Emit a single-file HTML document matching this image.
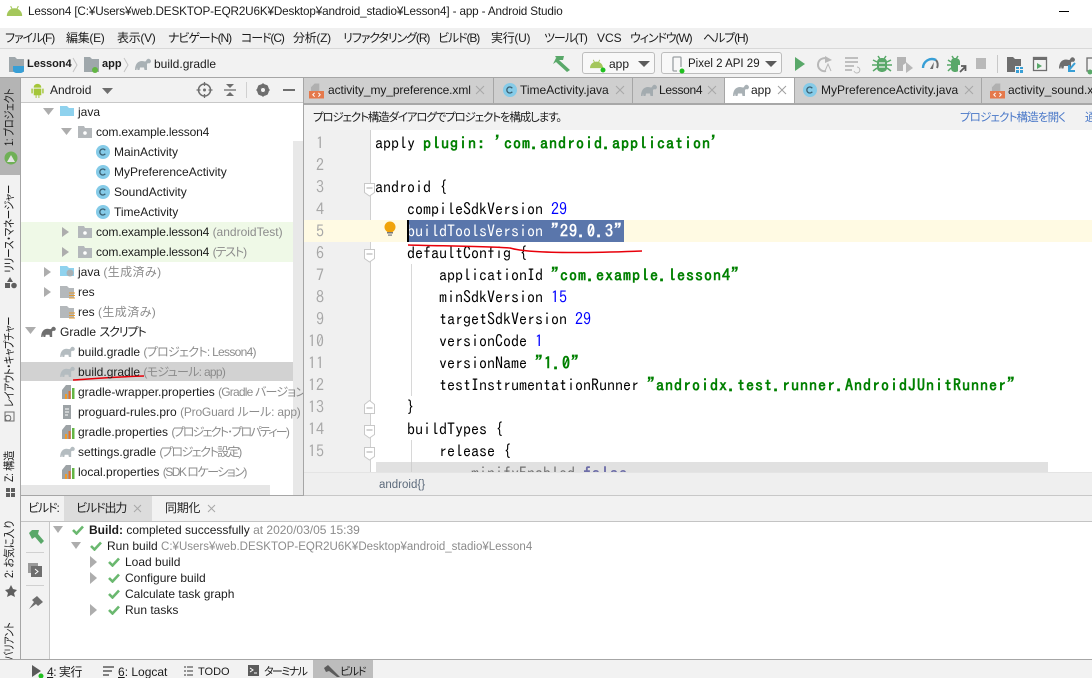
<!DOCTYPE html>
<html><head><meta charset="utf-8"><style>
*{box-sizing:border-box}
html,body{margin:0;padding:0;width:1092px;height:678px;overflow:hidden;background:#fff}
body{position:relative;font-family:"Liberation Sans","Noto Sans CJK JP",sans-serif;font-size:12px;color:#1c1c1c;font-feature-settings:"palt"}
.b{position:absolute}
.t{position:absolute;white-space:nowrap;line-height:18px;height:18px;font-size:12px}
.j{letter-spacing:-1.1px}
.g{color:#8c8c8c}
.m{position:absolute;white-space:pre;font-family:"IPAGothic","Liberation Mono",monospace;font-size:16px;line-height:22px;height:22px;color:#000;left:375px;font-feature-settings:normal}
.n{position:absolute;font-family:"IPAGothic","Liberation Mono",monospace;font-size:16px;line-height:22px;color:#a8a8a8;width:30px;text-align:right;left:294px;font-feature-settings:normal}
.s{color:#008000;font-weight:bold;letter-spacing:1px}.u{color:#0000ff}
.v{position:absolute;writing-mode:vertical-rl;text-orientation:sideways;transform-origin:10px 0;white-space:nowrap;font-size:11.5px;line-height:20px;width:20px;left:0;letter-spacing:-.3px}
svg{position:absolute;left:0;top:0}
</style></head><body>
<!-- backgrounds -->
<div class="b" style="left:0;top:28px;width:1092px;height:20px;background:#f0f0f0"></div>
<div class="b" style="left:0;top:48px;width:1092px;height:1px;background:#d8d8d8"></div>
<div class="b" style="left:0;top:49px;width:1092px;height:28px;background:#f2f2f2"></div>
<div class="b" style="left:0;top:77px;width:1092px;height:1px;background:#a6a6a6"></div>
<div class="b" style="left:0;top:78px;width:20px;height:582px;background:#f2f2f2"></div>
<div class="b" style="left:0;top:78px;width:20px;height:97px;background:#b4b4b4"></div>
<div class="b" style="left:20px;top:78px;width:1px;height:582px;background:#a6a6a6"></div>
<div class="b" style="left:21px;top:78px;width:283px;height:24px;background:#f2f2f2"></div>
<div class="b" style="left:21px;top:102px;width:283px;height:1px;background:#c8c8c8"></div>
<div class="b" style="left:21px;top:222px;width:272px;height:40px;background:#eff9e7"></div>
<div class="b" style="left:21px;top:362px;width:272px;height:19px;background:#d2d2d2"></div>
<div class="b" style="left:293px;top:141px;width:10px;height:354px;background:#e8e8e8"></div>
<div class="b" style="left:21px;top:485px;width:249px;height:10px;background:#e6e6e6"></div>
<div class="b" style="left:303px;top:78px;width:1px;height:417px;background:#a6a6a6"></div>
<!-- editor tabs -->
<div class="b" style="left:304px;top:78px;width:788px;height:25px;background:#cfcfcf"></div>
<div class="b" style="left:724px;top:78px;width:70px;height:25px;background:#fff"></div>
<div class="b" style="left:304px;top:103px;width:788px;height:2px;background:#a8a8a8"></div>
<div class="b" style="left:493px;top:78px;width:1px;height:25px;background:#a6a6a6"></div>
<div class="b" style="left:632px;top:78px;width:1px;height:25px;background:#a6a6a6"></div>
<div class="b" style="left:724px;top:78px;width:1px;height:25px;background:#a6a6a6"></div>
<div class="b" style="left:794px;top:78px;width:1px;height:25px;background:#a6a6a6"></div>
<div class="b" style="left:981px;top:78px;width:1px;height:25px;background:#a6a6a6"></div>
<div class="b" style="left:304px;top:105px;width:788px;height:25px;background:#f2f2f2"></div>
<!-- gutter -->
<div class="b" style="left:304px;top:130px;width:66px;height:342px;background:#f0f0f0"></div>
<div class="b" style="left:370px;top:130px;width:1px;height:342px;background:#d0d0d0"></div>
<div class="b" style="left:304px;top:220px;width:788px;height:22px;background:#fffae3"></div>
<div class="b" style="left:407px;top:220px;width:217px;height:22px;background:#5a76ab"></div>
<div class="b" style="left:411px;top:264px;width:1px;height:132px;background:#d8d8d8"></div>
<div class="b" style="left:411px;top:440px;width:1px;height:32px;background:#d8d8d8"></div>
<!-- code -->
<div class="n" style="top:132px">1</div><div class="n" style="top:154px">2</div><div class="n" style="top:176px">3</div><div class="n" style="top:198px">4</div><div class="n" style="top:220px">5</div><div class="n" style="top:242px">6</div><div class="n" style="top:264px">7</div><div class="n" style="top:286px">8</div><div class="n" style="top:308px">9</div><div class="n" style="top:330px">10</div><div class="n" style="top:352px">11</div><div class="n" style="top:374px">12</div><div class="n" style="top:396px">13</div><div class="n" style="top:418px">14</div><div class="n" style="top:440px">15</div>
<div class="m" style="top:132px">apply <span class="s">plugin: 'com.android.application'</span></div>
<div class="m" style="top:176px">android {</div>
<div class="m" style="top:198px">    compileSdkVersion <span class="u">29</span></div>
<div class="m" style="top:220px;color:#fff">    buildToolsVersion <span class="s" style="color:#fff">"29.0.3"</span></div>
<div class="b" style="left:407px;top:220px;width:2px;height:22px;background:#000"></div>
<div class="m" style="top:242px">    defaultConfig {</div>
<div class="m" style="top:264px">        applicationId <span class="s">"com.example.lesson4"</span></div>
<div class="m" style="top:286px">        minSdkVersion <span class="u">15</span></div>
<div class="m" style="top:308px">        targetSdkVersion <span class="u">29</span></div>
<div class="m" style="top:330px">        versionCode <span class="u">1</span></div>
<div class="m" style="top:352px">        versionName <span class="s">"1.0"</span></div>
<div class="m" style="top:374px">        testInstrumentationRunner <span class="s">"androidx.test.runner.AndroidJUnitRunner"</span></div>
<div class="m" style="top:396px">    }</div>
<div class="m" style="top:418px">    buildTypes {</div>
<div class="m" style="top:440px">        release {</div>
<div class="m" style="top:462px;height:10px;overflow:hidden">            minifyEnabled <span style="color:#000080;font-weight:bold;letter-spacing:1px">false</span></div>
<div class="b" style="left:376px;top:462px;width:672px;height:10px;background:rgba(200,200,200,.55)"></div>
<div class="b" style="left:304px;top:472px;width:788px;height:23px;background:#efefef;border-top:1px solid #e4e4e4"></div>
<div class="b" style="left:304px;top:495px;width:788px;height:1px;background:#c8c8c8"></div>
<div class="t" style="left:379px;top:476px;font-size:11.5px;color:#5d6b7c">android{}</div>
<!-- bottom -->
<div class="b" style="left:21px;top:495px;width:283px;height:1px;background:#a6a6a6"></div>
<div class="b" style="left:21px;top:496px;width:1071px;height:25px;background:#f2f2f2"></div>
<div class="b" style="left:64px;top:496px;width:88px;height:25px;background:#dcdcdc"></div>
<div class="b" style="left:21px;top:521px;width:1071px;height:1px;background:#c4c4c4"></div>
<div class="b" style="left:21px;top:522px;width:28px;height:137px;background:#f2f2f2"></div>
<div class="b" style="left:49px;top:522px;width:1px;height:137px;background:#c8c8c8"></div>
<div class="b" style="left:0;top:660px;width:1092px;height:18px;background:#f2f2f2"></div>
<div class="b" style="left:313px;top:660px;width:60px;height:18px;background:#bdbdbd"></div>
<div class="b" style="left:26px;top:552px;width:18px;height:1px;background:#d0d0d0"></div>
<div class="b" style="left:26px;top:585px;width:18px;height:1px;background:#d0d0d0"></div>
<!-- dropdown boxes -->
<div class="b" style="left:582px;top:52px;width:73px;height:22px;background:#f8f8f8;border:1px solid #bdbdbd;border-radius:3px"></div>
<div class="b" style="left:661px;top:52px;width:121px;height:22px;background:#f8f8f8;border:1px solid #bdbdbd;border-radius:3px"></div>
<div class="b" style="left:997px;top:55px;width:1px;height:18px;background:#c8c8c8"></div>
<div class="b" style="left:246px;top:82px;width:1px;height:16px;background:#d0d0d0"></div>

<!-- icons -->
<svg width="1092" height="678" viewBox="0 0 1092 678">
<defs>
<symbol id="ele" viewBox="0 0 16 12"><path d="M0 12C0 6 3 3 7 3C9 3 10 4 11 3C12 0 15 0 16 3C16 5 14 6 13 5L12 6V12H9.500L9 9.500H5L4.500 12H2.500L2 9.500L1.500 12Z"/></symbol>
<symbol id="cl" viewBox="0 0 14 14"><circle cx="7" cy="7" r="7" fill="#85cbe8"/><path d="M9.300 5.300A3 3 0 1 0 9.300 8.700" fill="none" stroke="#3b5f70" stroke-width="1.300"/></symbol>
<symbol id="pk" viewBox="0 0 14 12"><path d="M0 0H6L7 2H14V12H0Z" fill="#b4b8bb"/><circle cx="7" cy="7" r="1.800" fill="#fff"/></symbol>
<symbol id="pr" viewBox="0 0 14 14"><path d="M0 5L4 0H9V14H0Z" fill="#9da3a6"/><rect x="3" y="9" width="2" height="5" fill="#f09a28"/><rect x="6.500" y="6" width="2" height="8" fill="#e2702a"/><rect x="10" y="3" width="2.500" height="11" fill="#62b543"/></symbol>
<symbol id="ck" viewBox="0 0 12 10"><path d="M1 5L4.500 8.500L11 1.500" fill="none" stroke="#6ab86f" stroke-width="2.600"/></symbol>
<symbol id="an" viewBox="0 0 14 10"><path d="M0 10C0 6 3 3 7 3C11 3 14 6 14 10Z"/><path d="M3.500 1L5 4M10.500 1L9 4" stroke-width="1" stroke="currentColor"/></symbol>
<symbol id="fx" viewBox="0 0 14 18"><path d="M3 7H11V14H9V17H8V14H6V17H5V14H3ZM3 6C3 3 5 2 7 2C9 2 11 3 11 6ZM0.500 7H2V12H0.500ZM12 7H13.500V12H12Z" fill="#a4c639"/></symbol>
<symbol id="xml" viewBox="0 0 16 16"><path d="M2 0H11V8H2Z" fill="#b0b0b0"/><path d="M2 4L6 0H2Z" fill="#cfcfcf"/><rect y="8" width="16" height="8" fill="#e5794b"/><path d="M6 10L4 12L6 14M10 10L12 12L10 14" fill="none" stroke="#fff" stroke-width="1"/></symbol>
</defs>
<!-- title bar android -->
<g color="#a4c75b" fill="#a4c75b"><use href="#an" x="6" y="5" width="17" height="11"/></g>
<!-- nav -->
<path d="M9 57H15L17 59H24V72H9Z" fill="#9fa7ab"/><path d="M13 66H24V70C24 72 22 73 20 73H17C15 73 13 72 13 70Z" fill="#389fd6"/>
<path d="M73 58L77 65L73 72" fill="none" stroke="#c4c4c4"/>
<path d="M84 57H90L92 59H99V72H84Z" fill="#9fa7ab"/><circle cx="95" cy="70" r="3" fill="#62b543"/>
<path d="M124 58L128 65L124 72" fill="none" stroke="#c4c4c4"/>
<use href="#ele" x="135" y="58" width="16" height="12" fill="#a9b1b5"/>
<!-- toolbar -->
<path d="M555 57L559 60L570 70L567 72L556 62L553 64L556 58Z M555 56H564L563 60H558Z" fill="#59a869"/>
<g color="#a4c75b" fill="#a4c75b"><use href="#an" x="590" y="58" width="13" height="11"/></g><circle cx="603" cy="70" r="2.500" fill="#1fbf1f"/>
<path d="M638 61H650L644 67Z" fill="#5b5b5b"/>
<rect x="673" y="57" width="8" height="14" rx="1" fill="none" stroke="#9aa0a3" stroke-width="1.300"/><rect x="677" y="67" width="5" height="5" fill="#f8f8f8"/><circle cx="682" cy="71" r="2.500" fill="#1fbf1f"/>
<path d="M765 61H777L771 67Z" fill="#5b5b5b"/>
<path d="M795 57L805 64L795 71Z" fill="#59a869"/>
<path d="M829 60A6.500 6.500 0 1 0 826 71" fill="none" stroke="#b8b8b8" stroke-width="2"/><path d="M825 56L832 60L825 63Z" fill="#b8b8b8"/><path d="M825 71L828 64L831 71" fill="none" stroke="#b8b8b8"/>
<path d="M845 58H858M845 62H858M845 66H854M845 70H852" stroke="#b8b8b8" stroke-width="1.700"/><path d="M857 67A3 3 0 1 1 854 71" fill="none" stroke="#b8b8b8"/>
<path d="M877 62C877 59 880 58 882 58C884 58 887 59 887 62V68C887 71 884 72 882 72C880 72 877 71 877 68Z" fill="#59a869"/><path d="M873 60L877 62M891 60L887 62M872 65H877M892 65H887M873 71L877 68M891 71L887 68M878 56L880 59M886 56L884 59" stroke="#59a869" stroke-width="1.500"/><path d="M879 63H885M879 67H885" stroke="#f2f2f2" stroke-width="1.300"/>
<path d="M897 57H906V63L903 65V71H897Z" fill="#b4b4b4"/><path d="M906 62L913 68L906 73Z" fill="#b8b8b8"/>
<path d="M923 68A9 9 0 0 1 936 60" fill="none" stroke="#389fd6" stroke-width="2.400"/><path d="M936 60A8 8 0 0 1 937 68" fill="none" stroke="#6e6e6e" stroke-width="2"/><path d="M930 69L934 62L933 69Z" fill="#6e6e6e"/>
<path d="M951 62C951 59 953 58 955 58C957 58 960 59 960 62V68C960 71 957 72 955 72C953 72 951 71 951 68Z" fill="#59a869"/><path d="M948 60L951 62M947 65H951M948 71L951 68M952 56L954 59M958 56L956 59" stroke="#59a869" stroke-width="1.500"/><path d="M958 65H966V73H958Z" fill="#f2f2f2"/><path d="M960 72L965 67M961 66H965.500V71" fill="none" stroke="#5b5b5b" stroke-width="1.800"/>
<rect x="976" y="58" width="10" height="11" fill="#b9b9b9"/>
<path d="M1007 57H1013L1015 59H1021V66H1015V72H1007Z" fill="#6e6e6e"/><rect x="1015" y="66" width="9" height="7" fill="#f2f2f2"/><path d="M1016 67H1019V69H1016ZM1020 67H1023V69H1020ZM1016 70H1019V73H1016ZM1020 70H1023V73H1020Z" fill="#389fd6"/>
<rect x="1033.500" y="57.500" width="13" height="13" fill="none" stroke="#6e6e6e" stroke-width="1.300"/><rect x="1033" y="57" width="14" height="3" fill="#6e6e6e"/><path d="M1037 63L1042 66L1037 69Z" fill="#59a869"/>
<use href="#ele" x="1059" y="56" width="16" height="13" fill="#6e6e6e"/><path d="M1075 63L1069 70M1069 65V71H1075" fill="none" stroke="#389fd6" stroke-width="2"/>
<rect x="1087" y="58" width="8" height="13" fill="none" stroke="#6e6e6e" stroke-width="1.300"/><circle cx="1090" cy="72" r="2.500" fill="#59a869"/>
<!-- left stripe icons -->
<circle cx="11" cy="158" r="6.500" fill="#6fb056"/><path d="M7 162L11 155L15 162Z" fill="#e4e4e4"/>
<path d="M10 277L13 282H7Z M5 283H10V288H5Z" fill="#5f5f5f"/><circle cx="14" cy="285.500" r="2.800" fill="#5f5f5f"/>
<rect x="5" y="412" width="9" height="9" fill="none" stroke="#6e6e6e"/><circle cx="8" cy="418" r="2.800" fill="#f2f2f2" stroke="#6e6e6e"/>
<path d="M6 488H10V492H6ZM11 488H15V492H11ZM11 493H15V497H11ZM6 493H10V497H6Z" fill="#5f5f5f"/>
<path d="M11 585L13 589L17 590L14 593L15 597L11 595L7 597L8 593L5 590L9 589Z" fill="#5f5f5f"/>
<!-- project head -->
<use href="#fx" x="30" y="82" width="15" height="17"/>
<path d="M102 88H113L107.500 94Z" fill="#6e6e6e"/>
<circle cx="204.500" cy="90" r="6" fill="none" stroke="#6e6e6e" stroke-width="1.500"/><circle cx="204.500" cy="90" r="1.500" fill="#6e6e6e"/><path d="M204.500 82V86M204.500 94V98M196.500 90H200.500M208.500 90H212.500" stroke="#6e6e6e" stroke-width="1.300"/>
<path d="M224 90H236" stroke="#6e6e6e" stroke-width="1.300"/><path d="M226 84H234L230 88ZM226 96H234L230 92Z" fill="#6e6e6e"/>
<circle cx="263" cy="90" r="4.500" fill="none" stroke="#6e6e6e" stroke-width="3"/><path d="M263 83.500V96.500M256.500 90H269.500M258.500 85.500L267.500 94.500M267.500 85.500L258.500 94.500" stroke="#6e6e6e" stroke-width="2"/><circle cx="263" cy="90" r="2" fill="#f2f2f2"/>
<rect x="283" y="89" width="12" height="2" fill="#6e6e6e"/>
<!-- tabs -->
<use href="#xml" x="309" y="83" width="15" height="16"/>
<path d="M476 86L484 94M484 86L476 94" stroke="#a8a8a8"/>
<use href="#cl" x="503" y="83" width="14" height="14"/>
<path d="M616 86L624 94M624 86L616 94" stroke="#a8a8a8"/>
<use href="#ele" x="641" y="84" width="16" height="12" fill="#a3abaf"/>
<path d="M708 86L716 94M716 86L708 94" stroke="#a8a8a8"/>
<use href="#ele" x="733" y="84" width="16" height="12" fill="#a9b1b5"/>
<path d="M778 86L786 94M786 86L778 94" stroke="#a0a0a0"/>
<use href="#cl" x="803" y="83" width="14" height="14"/>
<path d="M965 86L973 94M973 86L965 94" stroke="#a8a8a8"/>
<use href="#xml" x="990" y="83" width="15" height="16"/>
<!-- tree -->
<g fill="#adadad">
<path d="M43 108H54L48.500 115Z"/><path d="M61 128H72L66.500 135Z"/>
<path d="M62 227L69 232L62 237Z"/><path d="M62 247L69 252L62 257Z"/>
<path d="M44 267L51 272L44 277Z"/><path d="M44 287L51 292L44 297Z"/>
<path d="M25 327H36L30.500 334Z"/></g>
<path d="M60 106H67L69 108H74V116H60Z" fill="#8fd2ee"/>
<use href="#pk" x="78" y="126" width="14" height="12"/>
<use href="#cl" x="96" y="145" width="14" height="14"/><use href="#cl" x="96" y="165" width="14" height="14"/><use href="#cl" x="96" y="185" width="14" height="14"/><use href="#cl" x="96" y="205" width="14" height="14"/>
<use href="#pk" x="78" y="226" width="14" height="12"/><use href="#pk" x="78" y="246" width="14" height="12"/>
<path d="M60 266H67L69 268H74V276H60Z" fill="#8fd2ee"/><circle cx="70" cy="273" r="3.500" fill="#a9b1b5"/>
<path d="M60 286H67L69 288H74V298H60Z" fill="#b4b8bb"/><path d="M69 293H75M69 295.500H75M69 298H75" stroke="#e69a2e"/>
<path d="M60 306H67L69 308H74V318H60Z" fill="#b4b8bb"/><path d="M69 313H75M69 315.500H75M69 318H75" stroke="#e69a2e"/>
<use href="#ele" x="41" y="326" width="15" height="11" fill="#6e6e6e"/>
<use href="#ele" x="60" y="346" width="15" height="11" fill="#b4bcc0"/>
<use href="#ele" x="60" y="366" width="15" height="11" fill="#b4bcc0"/>
<use href="#pr" x="62" y="385" width="14" height="14"/>
<path d="M63 405H71V419H63Z" fill="#9da3a6"/><path d="M65 409H69M65 412H69M65 415H68" stroke="#fff"/>
<use href="#pr" x="62" y="425" width="14" height="14"/>
<use href="#ele" x="60" y="446" width="15" height="11" fill="#b4bcc0"/>
<use href="#pr" x="62" y="465" width="14" height="14"/>
<!-- red strokes -->
<path d="M73 380C90 379 110 377 144 376" fill="none" stroke="#e8000a" stroke-width="1.500"/>
<path d="M408 245C440 246 480 246 510 248C530 254 590 253 642 251" fill="none" stroke="#e8000a" stroke-width="1.500"/>
<!-- bulb -->
<circle cx="390" cy="227" r="5.500" fill="#f0a30a"/><rect x="387" y="232" width="6" height="1.500" fill="#777"/><rect x="388" y="234.500" width="4" height="1.200" fill="#777"/>
<!-- folds -->
<g fill="#fff" stroke="#c8c8c8">
<path d="M364.500 183.500H374.500V192.500L369.500 196L364.500 192.500Z"/><path d="M364.500 249.500H374.500V258.500L369.500 262L364.500 258.500Z"/>
<path d="M364.500 413.500H374.500V404.500L369.500 400.500L364.500 404.500Z"/>
<path d="M364.500 425.500H374.500V434.500L369.500 438L364.500 434.500Z"/><path d="M364.500 447.500H374.500V456.500L369.500 460L364.500 456.500Z"/></g>
<path d="M366.500 188H372.500M366.500 254H372.500M366.500 408H372.500M366.500 430H372.500M366.500 452H372.500" stroke="#a8a8a8"/>
<!-- bottom tabs x -->
<path d="M134 505L141 512M141 505L134 512M208 505L215 512M215 505L208 512" stroke="#a8a8a8"/>
<!-- bottom left tools -->
<path d="M29 533L32 530H39L38 534L44 541L41 544L35 537L32 539Z" fill="#59a869"/>
<rect x="28" y="563" width="10" height="10" fill="#9a9a9a"/><rect x="31" y="566" width="11" height="11" fill="#6e6e6e"/><path d="M35 569L38 571.500L35 574" fill="none" stroke="#fff"/>
<path d="M29 609L34 602L32 600L37 596L43 602L38 606L36 604Z" fill="#6e6e6e"/>
<!-- build tree -->
<g fill="#adadad"><path d="M53 526H63L58 533Z"/><path d="M71 542H81L76 549Z"/><path d="M90 556L97 562L90 568Z"/><path d="M90 572L97 578L90 584Z"/><path d="M90 604L97 610L90 616Z"/></g>
<use href="#ck" x="72" y="525" width="12" height="10"/><use href="#ck" x="90" y="541" width="12" height="10"/><use href="#ck" x="108" y="557" width="12" height="10"/><use href="#ck" x="108" y="573" width="12" height="10"/><use href="#ck" x="108" y="589" width="12" height="10"/><use href="#ck" x="108" y="605" width="12" height="10"/>
<!-- status -->
<path d="M32 665L41 671L32 677Z" fill="#5b5b5b"/><circle cx="41" cy="676" r="2.500" fill="#1fbf1f"/>
<path d="M103 667H114M103 671H112M103 675H109" stroke="#5b5b5b" stroke-width="1.500"/>
<path d="M184 667H186M187 667H193M184 671H186M187 671H193M184 675H186M187 675H193" stroke="#5b5b5b" stroke-width="1.300"/>
<rect x="248" y="665" width="11" height="11" fill="#5b5b5b"/><path d="M250 668L253 670L250 672M254 673H257" fill="none" stroke="#fff"/>
<path d="M324 668L328 665L340 677H337L329 671L326 672Z" fill="#5b5b5b"/>
</svg>

<!-- title -->
<div class="t" style="left:28px;top:3px;font-size:11.7px;letter-spacing:-.14px">Lesson4 [C:¥Users¥web.DESKTOP-EQR2U6K¥Desktop¥android_stadio¥Lesson4] - app - Android Studio</div>
<div class="b" style="left:1059px;top:11px;width:10px;height:1px;background:#000"></div>
<!-- menu -->
<div class="t j" style="left:5px;top:29px">ファイル(F)</div>
<div class="t" style="left:66px;top:29px;letter-spacing:-.3px">編集(E)</div>
<div class="t" style="left:117px;top:29px;letter-spacing:-.3px">表示(V)</div>
<div class="t j" style="left:168px;top:29px">ナビゲート(N)</div>
<div class="t j" style="left:241px;top:29px">コード(C)</div>
<div class="t" style="left:293px;top:29px;letter-spacing:-.3px">分析(Z)</div>
<div class="t j" style="left:343px;top:29px">リファクタリング(R)</div>
<div class="t j" style="left:438px;top:29px">ビルド(B)</div>
<div class="t" style="left:491px;top:29px;letter-spacing:-.3px">実行(U)</div>
<div class="t j" style="left:544px;top:29px">ツール(T)</div>
<div class="t" style="left:597px;top:29px">VCS</div>
<div class="t j" style="left:630px;top:29px">ウィンドウ(W)</div>
<div class="t j" style="left:703px;top:29px">ヘルプ(H)</div>
<!-- nav text -->
<div class="t" style="left:27px;top:55px;font-weight:bold;font-size:11px">Lesson4</div>
<div class="t" style="left:102px;top:55px;font-weight:bold;font-size:11px">app</div>
<div class="t" style="left:154px;top:55px">build.gradle</div>
<div class="t" style="left:609px;top:55px">app</div>
<div class="t" style="left:688px;top:55px;font-size:11.5px">Pixel 2 API 29</div>
<!-- panel head -->
<div class="t" style="left:50px;top:81px">Android</div>
<!-- tabs text -->
<div class="t" style="left:328px;top:81px;letter-spacing:-.1px">activity_my_preference.xml</div>
<div class="t" style="left:520px;top:81px">TimeActivity.java</div>
<div class="t" style="left:659px;top:81px;letter-spacing:-.3px">Lesson4</div>
<div class="t" style="left:751px;top:81px">app</div>
<div class="t" style="left:821px;top:81px">MyPreferenceActivity.java</div>
<div class="t" style="left:1008px;top:81px">activity_sound.xml</div>
<!-- banner -->
<div class="t" style="left:313px;top:109px;font-size:11.5px;letter-spacing:-1.15px">プロジェクト構造ダイアログでプロジェクトを構成します。</div>
<div class="t" style="left:960px;top:109px;font-size:11.5px;letter-spacing:-.85px;color:#4a78c8">プロジェクト構造を開く</div>
<div class="t" style="left:1085px;top:109px;font-size:11.5px;color:#4a78c8">通</div>
<!-- tree text -->
<div class="t" style="left:78px;top:103px">java</div>
<div class="t" style="left:96px;top:123px;letter-spacing:-.15px">com.example.lesson4</div>
<div class="t" style="left:114px;top:143px">MainActivity</div>
<div class="t" style="left:114px;top:163px">MyPreferenceActivity</div>
<div class="t" style="left:114px;top:183px">SoundActivity</div>
<div class="t" style="left:114px;top:203px">TimeActivity</div>
<div class="t" style="left:96px;top:223px"><span style="letter-spacing:-.15px">com.example.lesson4</span> <span class="g">(androidTest)</span></div>
<div class="t" style="left:96px;top:243px"><span style="letter-spacing:-.15px">com.example.lesson4</span> <span class="g j">(テスト)</span></div>
<div class="t" style="left:78px;top:263px">java <span class="g" style="letter-spacing:.4px">(生成済み)</span></div>
<div class="t" style="left:78px;top:283px">res</div>
<div class="t" style="left:78px;top:303px">res <span class="g" style="letter-spacing:.4px">(生成済み)</span></div>
<div class="t" style="left:60px;top:323px">Gradle <span class="j">スクリプト</span></div>
<div class="t" style="left:78px;top:343px">build.gradle <span class="g" style="letter-spacing:-.7px">(プロジェクト: Lesson4)</span></div>
<div class="t" style="left:78px;top:363px">build.gradle <span class="g" style="letter-spacing:-.7px">(モジュール: app)</span></div>
<div class="t" style="left:78px;top:383px;width:225px;overflow:hidden">gradle-wrapper.properties <span class="g" style="letter-spacing:-.8px">(Gradle バージョン</span></div>
<div class="t" style="left:78px;top:403px">proguard-rules.pro <span class="g" style="letter-spacing:-.2px">(ProGuard ルール: app)</span></div>
<div class="t" style="left:78px;top:423px">gradle.properties <span class="g" style="letter-spacing:-1.8px">(プロジェクト･プロパティー)</span></div>
<div class="t" style="left:78px;top:443px">settings.gradle <span class="g" style="letter-spacing:-1.5px">(プロジェクト設定)</span></div>
<div class="t" style="left:78px;top:463px">local.properties <span class="g" style="letter-spacing:-1.5px">(SDK ロケーション)</span></div>
<!-- bottom text -->
<div class="t j" style="left:28px;top:499px">ビルド:</div>
<div class="t j" style="left:76px;top:499px">ビルド出力</div>
<div class="t" style="left:165px;top:499px;letter-spacing:-.3px">同期化</div>
<div class="t" style="left:89px;top:521px"><b>Build:</b> completed successfully <span class="g">at 2020/03/05 15:39</span></div>
<div class="t" style="left:107px;top:537px">Run build <span class="g" style="font-size:11.5px">C:¥Users¥web.DESKTOP-EQR2U6K¥Desktop¥android_stadio¥Lesson4</span></div>
<div class="t" style="left:125px;top:553px">Load build</div>
<div class="t" style="left:125px;top:569px">Configure build</div>
<div class="t" style="left:125px;top:585px">Calculate task graph</div>
<div class="t" style="left:125px;top:601px">Run tasks</div>
<!-- status text -->
<div class="t" style="left:47px;top:663px;letter-spacing:-.5px"><u>4</u>: 実行</div>
<div class="t" style="left:118px;top:663px"><u>6</u>: Logcat</div>
<div class="t" style="left:198px;top:663px;font-size:11px">TODO</div>
<div class="t" style="left:264px;top:663px;font-size:11px;letter-spacing:-1.6px">ターミナル</div>
<div class="t" style="left:340px;top:663px;font-size:11px;letter-spacing:-1.3px">ビルド</div>
<!-- vertical -->
<div class="v" style="top:146px;transform:rotate(180deg) scaleY(.8)">1: プロジェクト</div>
<div class="v" style="top:273px;transform:rotate(180deg) scaleY(.83)">リリース・マネージャー</div>
<div class="v" style="top:407px;transform:rotate(180deg) scaleY(.79)">レイアウト・キャプチャー</div>
<div class="v" style="top:482px;transform:rotate(180deg) scaleY(.89)">Z: 構造</div>
<div class="v" style="top:578px;transform:rotate(180deg) scaleY(.88)">2: お気に入り</div>
<div class="v" style="top:660px;transform:rotate(180deg) scaleY(.78)">バリアント</div>
<div class="b" style="left:0;top:659px;width:1092px;height:1px;background:#a6a6a6"></div>
</body></html>
